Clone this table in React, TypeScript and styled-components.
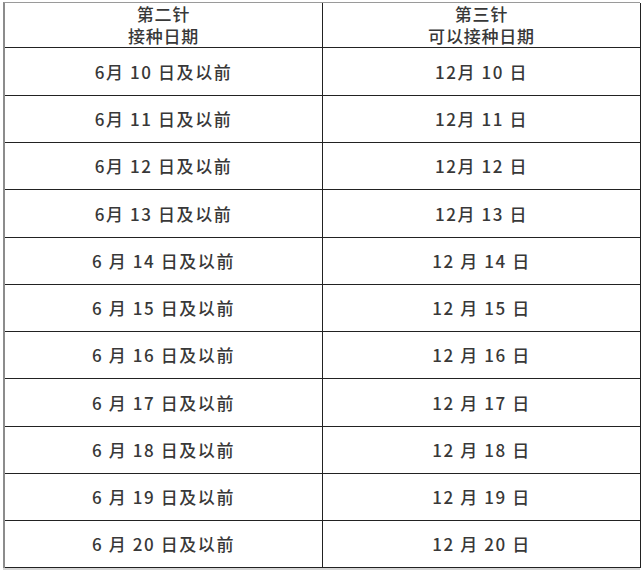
import React from "react";
import styled, { createGlobalStyle } from "styled-components";

const Global = createGlobalStyle`
  html, body {
    margin: 0;
    padding: 0;
    background: #fff;
  }
  body {
    font-family: "Noto Sans CJK SC", "Noto Sans", sans-serif;
    color: #383838;
  }
`;

const Page = styled.div`
  width: 641px;
  height: 571px;
  padding: 2px 0 0 3px;
  box-sizing: border-box;
  overflow: hidden;
`;

const Sheet = styled.div`
  display: grid;
  width: 637px;
  grid-template-columns: 318px 319px;
  grid-template-rows: 45px 48px 47px 47px 48px 47px 47px 47px 48px 47px 47px 47px;
  border-top: 1px solid #9a9a9a;
  border-left: 2px solid #8c8c8c;
  box-sizing: border-box;
  box-shadow: 0 2px 0 #d6d6d6;
`;

const Cell = styled.div<{ $last?: boolean }>`
  display: flex;
  flex-direction: column;
  align-items: center;
  justify-content: center;
  border-bottom: 1px solid #222;
  border-right: ${(p) => (p.$last ? "2px solid #222" : "1px solid #222")};
  font-size: 17px;
  font-weight: 500;
  letter-spacing: 1.6px;
  line-height: 22px;
  white-space: pre;
`;

const HeadLine = styled.span`
  font-size: 17px;
  font-weight: 500;
  letter-spacing: 0.8px;
  line-height: 22px;
`;

const days = [10, 11, 12, 13, 14, 15, 16, 17, 18, 19, 20];

const App = () => (
  <Page>
    <Global />
    <Sheet>
      <Cell>
        <HeadLine>第二针</HeadLine>
        <HeadLine>接种日期</HeadLine>
      </Cell>
      <Cell $last>
        <HeadLine>第三针</HeadLine>
        <HeadLine>可以接种日期</HeadLine>
      </Cell>
      {days.map((d) => {
        const wide = d >= 14;
        return (
          <React.Fragment key={d}>
            <Cell>{wide ? `6 月 ${d} 日及以前` : `6月 ${d} 日及以前`}</Cell>
            <Cell $last>{wide ? `12 月 ${d} 日` : `12月 ${d} 日`}</Cell>
          </React.Fragment>
        );
      })}
    </Sheet>
  </Page>
);

export default App;
